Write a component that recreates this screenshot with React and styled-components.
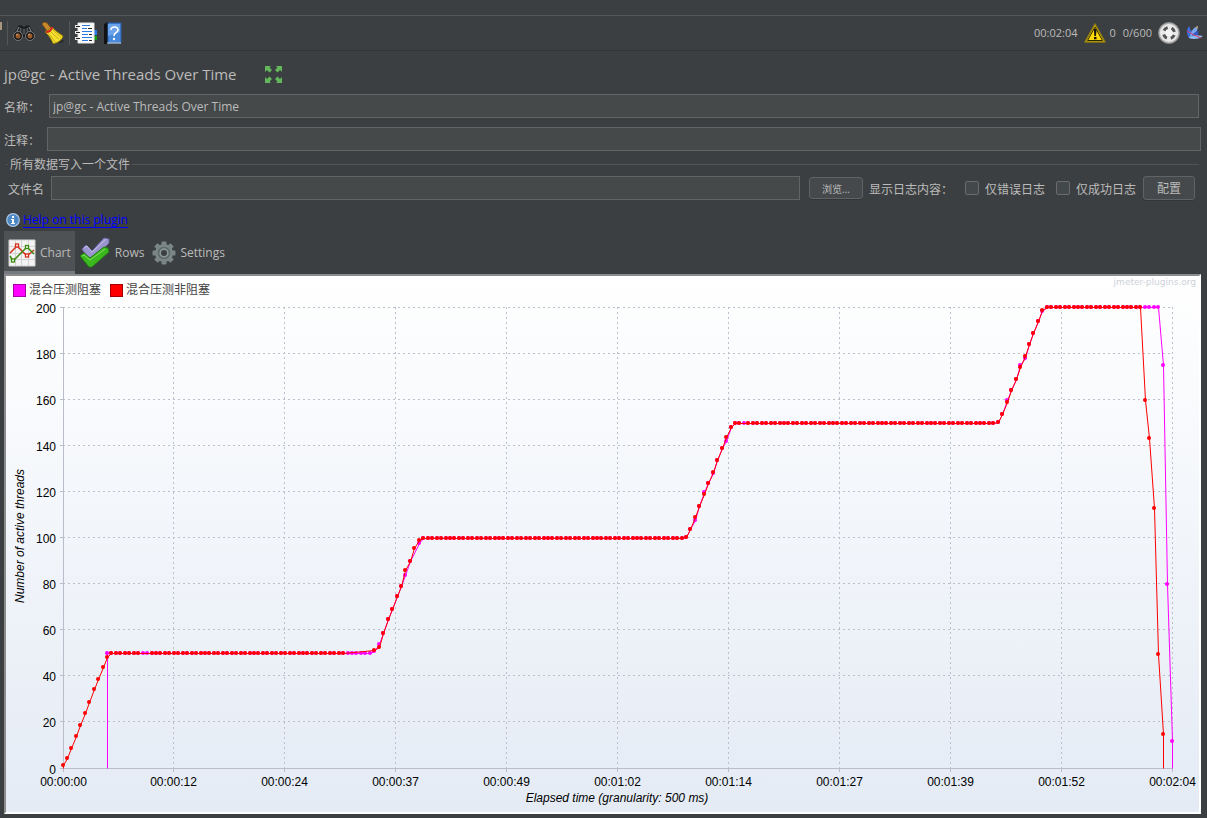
import { useState } from 'react';
import styled, { createGlobalStyle } from 'styled-components';

// chart geometry, in viewBox units
const LEFT = 57;
const TOP = 9;
const WIDTH = 1109;
const HEIGHT = 461;
const LAST = 249;

const xTicks = [
  '00:00:00',
  '00:00:12',
  '00:00:24',
  '00:00:37',
  '00:00:49',
  '00:01:02',
  '00:01:14',
  '00:01:27',
  '00:01:39',
  '00:01:52',
  '00:02:04',
];
const yTicks = [0, 20, 40, 60, 80, 100, 120, 140, 160, 180, 200];

const flat = (from, to, value) =>
  Array.from({ length: to - from + 1 }, (_, i) => [from + i, value]);
const ramp = (from, values) => values.map((value, i) => [from + i, value]);

const blocking = [
  ...flat(10, 69, 50),
  ...ramp(70, [51, 54, 59, 65, 69, 75, 79, 84, 90]),
  [80, 98],
  ...flat(81, 139, 100),
  ...ramp(140, [100.5, 104, 108, 114, 120, 124, 128, 134, 139, 142, 148]),
  ...flat(151, 209, 150),
  ...ramp(210, [150.5, 154, 160, 164, 169, 175, 178, 184, 189, 194, 198.5]),
  ...flat(221, 246, 200),
  ...ramp(247, [175, 80, 12]),
];

const nonBlocking = [
  ...ramp(0, [1.5, 4.5, 9, 14, 19, 24, 29, 34.5, 39, 44, 48.5]),
  ...flat(11, 17, 50),
  ...flat(20, 63, 50),
  ...ramp(70, [51.5, 52.5, 59, 65, 69, 75, 79, 86, 90, 95.5, 99]),
  ...flat(81, 139, 100),
  ...ramp(140, [100.5, 104, 109, 114, 119, 124, 128.5, 134, 139, 144, 148]),
  ...flat(151, 152, 150),
  ...flat(154, 209, 150),
  ...ramp(210, [150.5, 154, 159, 164, 169, 174, 179, 184, 189, 194, 199]),
  ...flat(221, 242, 200),
  ...ramp(243, [160, 143.5, 113, 49.5, 15]),
];

const series = [
  { name: '混合压测阻塞', color: '#ff00ff', points: blocking },
  { name: '混合压测非阻塞', color: '#ff0000', points: nonBlocking },
];

const px = (i) => Math.floor(LEFT + (i * WIDTH) / LAST);
const py = (v) => Math.ceil(TOP + HEIGHT - (v * HEIGHT) / 200);
const gridY = (v) => Math.floor(TOP + HEIGHT - (v * HEIGHT) / 200) + 0.5;

function Series({ color, points }) {
  const first = points[0][0];
  const last = points[points.length - 1][0];
  const line = [[first, 0], ...points, [last, 0]]
    .map(([i, v]) => `${px(i) + 0.5},${py(v) + 0.5}`)
    .join(' ');

  return (
    <g>
      <polyline points={line} fill="none" stroke={color} />
      {points.map(([i, v]) => (
        <circle key={i} cx={px(i)} cy={py(v)} r="2" fill={color} />
      ))}
    </g>
  );
}

function Chart() {
  return (
    <Plot viewBox="0 0 1193 514" role="img" aria-label="Active Threads Over Time">
      {yTicks.map((v) => (
        <g key={v}>
          {v > 0 && (
            <line x1={LEFT} x2={LEFT + WIDTH} y1={gridY(v)} y2={gridY(v)} stroke="#bcc0cc" strokeDasharray="2 3" />
          )}
          <line x1={LEFT - 3} x2={LEFT + 1} y1={gridY(v)} y2={gridY(v)} stroke="#b9bdca" />
          <text x="50" y={gridY(v) + 5} textAnchor="end">{v}</text>
        </g>
      ))}
      {xTicks.map((label, i) => {
        const x = Math.floor(LEFT + (i * WIDTH) / 10) + 0.5;
        return (
          <g key={label}>
            {i > 0 && (
              <line x1={x} x2={x} y1={TOP} y2={TOP + HEIGHT} stroke="#bcc0cc" strokeDasharray="2 3" />
            )}
            <line x1={x} x2={x} y1={TOP + HEIGHT} y2={TOP + HEIGHT + 4} stroke="#b9bdca" />
            <text x={x} y="488" textAnchor="middle">{label}</text>
          </g>
        );
      })}
      <path d={`M${LEFT + 0.5} ${TOP}V${TOP + HEIGHT + 0.5}H${LEFT + WIDTH}`} fill="none" stroke="#b9bdca" />
      {series.map((s) => (
        <Series key={s.name} color={s.color} points={s.points} />
      ))}
      <AxisTitle x="611" y="504">Elapsed time (granularity: 500 ms)</AxisTitle>
      <AxisTitle transform="translate(18 238) rotate(-90)">Number of active threads</AxisTitle>
    </Plot>
  );
}

const BinocularsIcon = () => (
  <svg width="22" height="18" viewBox="0 0 22 18">
    <path d="M6 2h3l1 2h2l1-2h3l3 5 2 5H1l2-5z" fill="#25282a" stroke="#141414" />
    <path d="M6 3L3 9M16 3l3 6M8 4v5M14 4v5" stroke="#8d9294" fill="none" />
    <rect x="9" y="4" width="4" height="7" fill="#4b4e50" stroke="#111" />
    <circle cx="5" cy="12" r="4.5" fill="#17191a" stroke="#777a7c" />
    <circle cx="17" cy="12" r="4.5" fill="#17191a" stroke="#777a7c" />
    <circle cx="5" cy="12" r="2.5" fill="#9a5a2c" />
    <circle cx="17" cy="12" r="2.5" fill="#9a5a2c" />
    <path d="M3 11l2-1M15 11l2-1" stroke="#e0a878" />
  </svg>
);

const BroomIcon = () => (
  <svg width="22" height="22" viewBox="0 0 22 22">
    <ellipse cx="15" cy="19" rx="7" ry="2" fill="#2b2d2e" />
    <path d="M0 2l2-2 3 1 4 5-4 3z" fill="#c98a2e" stroke="#7c5216" />
    <path d="M3 10l7-5c3 4 7 6 11 9-1 4-5 7-10 7.500C9 17 7 13 3 10z" fill="#f6e02e" stroke="#8f7a0c" />
    <path d="M6 11c3 3 5 6 7 9M8 9c3 3 6 6 9 8M10 7c3 3 6 6 9 8" stroke="#c9ad1c" fill="none" />
    <path d="M4 10c3 0 6-2 6-5" fill="none" stroke="#d81e1e" strokeWidth="2" />
  </svg>
);

const NotebookIcon = () => (
  <svg width="22" height="22" viewBox="0 0 22 22">
    <path d="M18 8h4v5h-4z" fill="#2f7be6" />
    <path d="M18 14h4v4h-4z" fill="#12a012" />
    <path d="M3 1h16v20H3z" fill="#fff" stroke="#e5e5e5" />
    <path d="M4 4.500H0M4 10.500H0M4 16.500H0" stroke="#e6e6e6" strokeWidth="3" />
    <path d="M1 4.500h4M1 10.500h4M1 16.500h4" stroke="#222" />
    <path d="M7 3.500h8M7 6.500h5M7 9.500h10M7 12.500h6M7 15.500h10M7 18.500h6" stroke="#2d78e0" />
    <path d="M13 6.500h4M14 12.500h3M14 18.500h3" stroke="#222" />
  </svg>
);

const HelpBookIcon = () => (
  <svg width="18" height="22" viewBox="0 0 18 22">
    <path d="M0 2l4-2v22H0z" fill="#101214" />
    <path d="M4 1h13v20H4z" fill="#4889dc" stroke="#2c62ae" />
    <path d="M4 2h12v8L4 14z" fill="#6ba3ea" />
    <path d="M3 21h14" stroke="#cfd6dd" />
    <path d="M7 8c0-4 7-4 7 0 0 3-4 2-4 6" fill="none" stroke="#fff" strokeWidth="1.600" />
    <circle cx="10" cy="17" r="1.200" fill="#fff" />
  </svg>
);

const WarningIcon = () => (
  <svg width="22" height="20" viewBox="0 0 22 20">
    <path d="M11 1L21 19H1z" fill="#f7cf12" stroke="#8f7c10" strokeWidth="1.500" strokeLinejoin="round" />
    <path d="M11 4l7.500 13.500h-15z" fill="#fcd900" stroke="#2c2800" strokeWidth="1" />
    <path d="M9.800 6h2.800l-.6 7h-1.600zM10 14h2.500v2.200H10z" fill="#151515" />
  </svg>
);

const TargetIcon = () => (
  <svg width="22" height="22" viewBox="0 0 22 22">
    <circle cx="11" cy="11" r="10.500" fill="#b9b9b9" stroke="#8b8b8b" />
    <circle cx="11" cy="11" r="9" fill="#e9e9e9" />
    <circle cx="11" cy="11" r="5.500" fill="none" stroke="#555" strokeWidth="3" strokeDasharray="4.600 4.040" strokeDashoffset="-2" />
    <circle cx="11" cy="11" r="3.500" fill="#f4f4f4" />
  </svg>
);

const FeatherIcon = () => (
  <svg width="18" height="16" viewBox="0 0 18 16">
    <path d="M3 13C0 9 1 4 3 1l3 7z" fill="#3c6fe0" />
    <path d="M4 12C4 7 7 3 12 1c0 3-2 7-4 10z" fill="#79a6ee" />
    <path d="M5 12c2-4 5-6 8-6l-2 6z" fill="#3559c8" />
    <path d="M3 12c4-2 10-2 14-1-3 3-10 4-14 2z" fill="#8cb9f2" />
    <path d="M1 6l7 4 7 3" stroke="#d4406c" fill="none" />
    <path d="M10 2l2-1-1 3z" fill="#e59a45" />
  </svg>
);

const ExpandIcon = () => (
  <svg width="17" height="17" viewBox="0 0 17 17" fill="#63b85c">
    <path d="M0 0h6L4.500 1.500 7 4 4.500 6.500 2 4 0 6z" />
    <path d="M17 0v6l-2-2-2.500 2.500L10 4l2.500-2.500L11 0z" />
    <path d="M0 17v-6l2 2 2.500-2.500L7 13l-2.500 2.500L6 17z" />
    <path d="M17 17h-6l1.500-1.500L10 13l2.500-2.500L15 13l2-2z" />
  </svg>
);

const InfoIcon = () => (
  <svg width="14" height="14" viewBox="0 0 14 14">
    <circle cx="7" cy="7" r="6.300" fill="#4d87c4" stroke="#a9c6e4" strokeWidth="1.200" />
    <path d="M6 3h2v2H6zM5 6h3v4h1v1H5v-1h1V7H5z" fill="#fff" />
  </svg>
);

const ChartIcon = () => (
  <svg width="28" height="28" viewBox="0 0 28 28">
    <path d="M1 1h26v26H1z" fill="#f3f3f3" stroke="#d0d0d0" />
    <path d="M7.500 1v26M13.500 1v26M20.500 1v26M1 7.500h26M1 14.500h26M1 20.500h26" stroke="#d3d3d3" fill="none" />
    <path d="M2 14l7-7 10 10 7-6" fill="none" stroke="#d4301c" strokeWidth="1.500" />
    <path d="M2 17l3 5L19 8l7 7" fill="none" stroke="#3d8a12" strokeWidth="1.500" />
    <g fill="#fff" strokeWidth="1.300">
      <rect x="7.500" y="5" width="3" height="3" stroke="#d4301c" />
      <rect x="17.500" y="15" width="3" height="3" stroke="#d4301c" />
      <rect x="3.500" y="20" width="3" height="3" stroke="#3d8a12" />
      <rect x="17.500" y="6.500" width="3" height="3" stroke="#3d8a12" />
    </g>
  </svg>
);

const RowsIcon = () => (
  <svg width="32" height="32" viewBox="0 0 32 32">
    <path d="M3 12l4-4 6 6L25 1l5 1v4L14 23l-3 1z" fill="#9a94cf" stroke="#6b66a3" />
    <path d="M5 11l3-2 5 6L27 2" fill="none" stroke="#c6c2ea" />
    <path d="M1 19l4-3 6 5L25 10l4 1 1 4-17 15h-3z" fill="#3cb81f" stroke="#1f7d10" />
    <path d="M3 19l2-1 6 5L26 12" fill="none" stroke="#7fe05c" />
  </svg>
);

const GearIcon = () => (
  <svg width="24" height="24" viewBox="0 0 24 24">
    <g fill="#7b8686">
      {[0, 45, 90, 135].map((angle) => (
        <rect key={angle} x="9.500" y="0.500" width="5" height="23" rx="1" transform={`rotate(${angle} 12 12)`} />
      ))}
      <circle cx="12" cy="12" r="9" />
    </g>
    <circle cx="12" cy="12" r="5.500" fill="#8b9696" stroke="#5d6767" strokeWidth="1.500" />
    <circle cx="12" cy="12" r="3" fill="#3c3f41" />
  </svg>
);

const tabs = [
  { name: 'Chart', Icon: ChartIcon },
  { name: 'Rows', Icon: RowsIcon },
  { name: 'Settings', Icon: GearIcon },
];

function App() {
  const [tab, setTab] = useState('Chart');
  const [name, setName] = useState('jp@gc - Active Threads Over Time');

  return (
    <Page>
      <GlobalStyle />
      <MenuEdge />
      <Toolbar>
        <Clipped />
        <Separator />
        <ToolButton aria-label="Search"><BinocularsIcon /></ToolButton>
        <ToolButton aria-label="Clear"><BroomIcon /></ToolButton>
        <Separator />
        <ToolButton aria-label="Functions"><NotebookIcon /></ToolButton>
        <ToolButton aria-label="Help"><HelpBookIcon /></ToolButton>
        <Status>
          <span>00:02:04</span>
          <WarningIcon />
          <Count>0</Count>
          <span>0/600</span>
          <TargetIcon />
          <FeatherIcon />
        </Status>
      </Toolbar>

      <Header>
        <Title>jp@gc - Active Threads Over Time</Title>
        <ToolButton aria-label="Expand"><ExpandIcon /></ToolButton>
      </Header>

      <NameRow>
        <Label htmlFor="name">名称：</Label>
        <TextInput id="name" value={name} onChange={(e) => setName(e.target.value)} />
      </NameRow>
      <CommentRow>
        <Label htmlFor="comment">注释：</Label>
        <TextInput id="comment" />
      </CommentRow>

      <FileGroup>
        <Legend>所有数据写入一个文件</Legend>
        <FileRow>
          <Label htmlFor="file">文件名</Label>
          <TextInput id="file" />
          <Browse type="button">浏览...</Browse>
          <LogLabel>显示日志内容：</LogLabel>
          <CheckLabel>
            <Checkbox type="checkbox" />
            <span>仅错误日志</span>
          </CheckLabel>
          <CheckLabel>
            <Checkbox type="checkbox" />
            <span>仅成功日志</span>
          </CheckLabel>
          <Button type="button">配置</Button>
        </FileRow>
      </FileGroup>

      <HelpRow>
        <InfoIcon />
        <HelpLink href="#help">Help on this plugin</HelpLink>
      </HelpRow>

      <Tabs role="tablist">
        {tabs.map(({ name: label, Icon }) => (
          <Tab
            key={label}
            role="tab"
            aria-selected={tab === label}
            $active={tab === label}
            onClick={() => setTab(label)}
          >
            <Icon />
            {label}
          </Tab>
        ))}
      </Tabs>

      <Panel>
        <ChartTop>
          {series.map((s) => (
            <SeriesName key={s.name} $color={s.color}>{s.name}</SeriesName>
          ))}
          <Watermark>jmeter-plugins.org</Watermark>
        </ChartTop>
        <Chart />
      </Panel>
    </Page>
  );
}

export default App;

const GlobalStyle = createGlobalStyle`
  *, *::before {
    box-sizing: border-box;
  }
  body {
    margin: 0;
    background: #3c3f41;
  }
  button, input {
    font: inherit;
    color: inherit;
  }
  svg {
    display: block;
    flex: none;
  }
`;

const Page = styled.div`
  min-height: 100vh;
  background: #3c3f41;
  color: #bbbbbb;
  font-family: 'Open Sans', 'Noto Sans CJK SC', sans-serif;
  font-size: 12px;
  line-height: 16px;
`;

const MenuEdge = styled.div`
  height: 16px;
  border-bottom: 1px solid #555759;
`;

const Toolbar = styled.div`
  display: flex;
  align-items: center;
  gap: 5px;
  height: 35px;
  padding-right: 3px;
  border-bottom: 1px solid #323537;
`;

const Clipped = styled.span`
  width: 2px;
  height: 8px;
  margin-bottom: 14px;
  background: #a89880;
`;

const Separator = styled.span`
  width: 1px;
  height: 24px;
  background: #555759;
`;

const ToolButton = styled.button`
  display: flex;
  padding: 0;
  border: none;
  background: none;

  & + & {
    margin-left: 2px;
  }
`;

const Status = styled.div`
  display: flex;
  align-items: center;
  gap: 6px;
  margin-left: auto;
  font-size: 11px;
`;

const Count = styled.span`
  margin: 0 1px 0 -2px;
`;

const Header = styled.div`
  display: flex;
  align-items: center;
  gap: 28px;
  height: 43px;
  padding: 3px 4px 0;
`;

const Title = styled.h1`
  margin: 0;
  font-size: 15px;
  font-weight: 400;
  line-height: 24px;
`;

const Label = styled.label`
  padding-top: 3px;
`;

const NameRow = styled.div`
  display: grid;
  grid-template-columns: 45px 1fr;
  align-items: center;
  padding: 0 8px 0 4px;
`;

const CommentRow = styled(NameRow)`
  grid-template-columns: 43px 1fr;
  margin-top: 9px;
  padding-right: 6px;
`;

const TextInput = styled.input`
  width: 100%;
  min-width: 0;
  height: 24px;
  padding: 0 3px;
  border: 1px solid #646464;
  background: #45494a;
  outline: none;
`;

const FileGroup = styled.fieldset`
  margin: 5px 8px 0 6px;
  padding: 0;
  border: none;
  border-top: 1px solid #515456;
`;

const Legend = styled.legend`
  margin-left: 2px;
  padding: 2px 2px 0;
  line-height: 14px;
`;

const FileRow = styled.div`
  display: flex;
  align-items: center;
  margin-top: 4px;
  padding: 0 4px 0 2px;

  label {
    flex: none;
  }
  > input {
    flex: 1;
    margin: 0 9px 0 7px;
  }
`;

const Button = styled.button`
  width: 52px;
  height: 24px;
  padding: 2px 0 0;
  border: 1px solid #5f6365;
  border-radius: 3px;
  background: #45494b;
  box-shadow: 0 1px 0 #34373a;
`;

const Browse = styled(Button)`
  width: 54px;
  height: 22px;
  font-size: 10px;
`;

const LogLabel = styled.span`
  margin: 0 12px 0 6px;
  padding-top: 3px;
`;

const CheckLabel = styled.label`
  display: flex;
  align-items: center;
  gap: 6px;
  margin-right: 11px;

  span {
    padding-top: 3px;
  }
  & + button {
    margin-left: -4px;
  }
`;

const Checkbox = styled.input`
  appearance: none;
  width: 14px;
  height: 14px;
  margin: 0;
  border: 1px solid #6b6b6b;
  border-radius: 2px;
  background: #43494a;

  &:checked {
    background: #8a9399;
  }
`;

const HelpRow = styled.div`
  display: flex;
  align-items: center;
  gap: 3px;
  margin-top: 12px;
  padding-left: 6px;
`;

const HelpLink = styled.a`
  color: #0000ff;
  text-decoration: none;
  border-bottom: 1px solid #0000ff;
  line-height: 15px;
`;

const Tabs = styled.div`
  display: flex;
  height: 43px;
  margin-top: 3px;
  padding-left: 4px;
`;

const Tab = styled.button`
  display: flex;
  align-items: center;
  gap: 4px;
  padding: 3px 4px 0;
  border: none;
  border-bottom: 3px solid ${({ $active }) => ($active ? '#747a80' : 'transparent')};
  background: ${({ $active }) => ($active ? '#4e5254' : 'transparent')};
`;

const Panel = styled.div`
  margin: 0 6px 0 4px;
  border: 2px solid;
  border-color: #8c8c8c #ffffff #ffffff #8c8c8c;
  background: linear-gradient(to bottom, #ffffff, #e4ebf5);
  color: #000000;
`;

const ChartTop = styled.div`
  display: flex;
  align-items: center;
  gap: 9px;
  height: 22px;
  padding: 6px 3px 0 7px;
`;

const SeriesName = styled.span`
  display: flex;
  align-items: center;
  gap: 3px;
  color: #444444;

  &::before {
    content: '';
    width: 13px;
    height: 13px;
    border: 1px solid rgba(0, 0, 0, 0.35);
    background: ${({ $color }) => $color};
  }
`;

const Watermark = styled.span`
  align-self: flex-start;
  margin: -8px 0 0 auto;
  color: #cdd1d8;
  font-family: 'DejaVu Sans', sans-serif;
  font-size: 9px;
`;

const Plot = styled.svg`
  width: 100%;
  height: auto;
  font-family: 'Liberation Sans', Arial, sans-serif;
  font-size: 12px;

  line, path {
    shape-rendering: crispEdges;
  }
`;

const AxisTitle = styled.text`
  font-style: italic;
  text-anchor: middle;
`;
